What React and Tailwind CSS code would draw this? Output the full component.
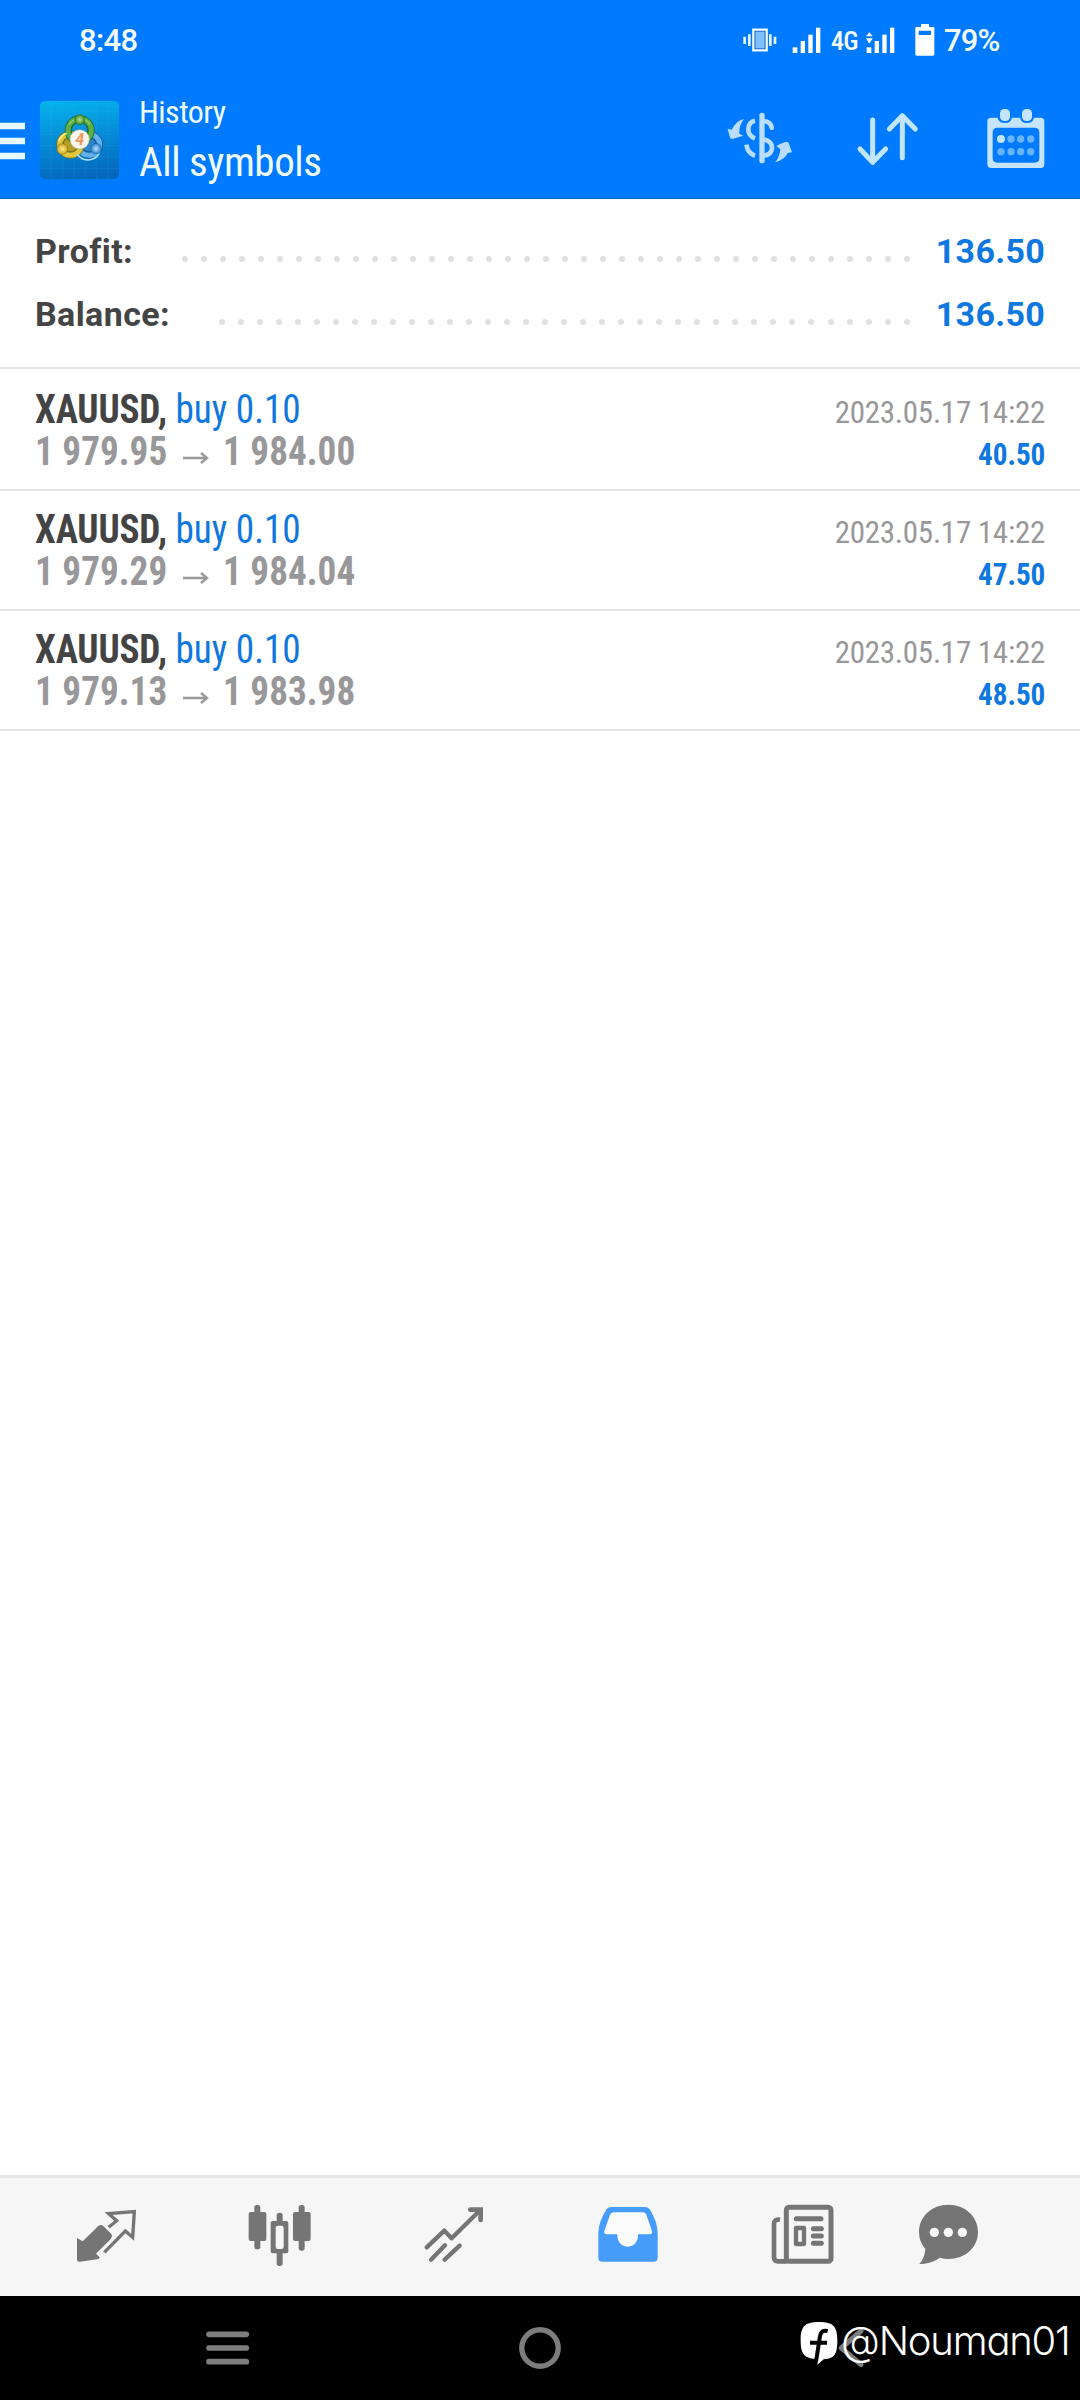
import React from 'react';

const summary = [
  { label: 'Profit:', value: '136.50', labelWidth: 'w-[147px]', dots: 39 },
  { label: 'Balance:', value: '136.50', labelWidth: 'w-[184px]', dots: 37 },
];

const deals = [
  { id: 1, symbol: 'XAUUSD', side: 'buy 0.10', open: '1 979.95', close: '1 984.00', time: '2023.05.17 14:22', profit: '40.50' },
  { id: 2, symbol: 'XAUUSD', side: 'buy 0.10', open: '1 979.29', close: '1 984.04', time: '2023.05.17 14:22', profit: '47.50' },
  { id: 3, symbol: 'XAUUSD', side: 'buy 0.10', open: '1 979.13', close: '1 983.98', time: '2023.05.17 14:22', profit: '48.50' },
];

function Signal({ data }) {
  return (
    <svg width="30" height="27" viewBox="0 0 90 81" fill="#fff">
      <rect x="2" y="61" width="14" height="17" />
      <rect x="26" y="42" width="13" height="36" />
      <rect x="49" y="23" width="13" height="55" />
      <rect x="72" y="2" width="13" height="76" />
      {data && <path d="M0 28L10 16L20 28ZM0 34H20L10 50Z" />}
    </svg>
  );
}

function StatusBar() {
  return (
    <div className="flex h-[82px] items-start text-[#f4fcff] font-medium">
      <span className="ml-[79px] mt-[21px] w-[664px] text-[31px] leading-[40px] tracking-[-0.6px]">8:48</span>
      <svg className="mt-[27px]" width="34" height="26" viewBox="130 81 102 78">
        <path d="M135 110V132M149 103V138M212 103V138M226 110V132" stroke="#e3f4ff" strokeWidth="8" />
        <rect x="161" y="89" width="40" height="62" fill="#7cc0ff" stroke="#f0faff" strokeWidth="7" />
        <rect x="166" y="94" width="30" height="52" fill="none" stroke="#2475cc" strokeWidth="3" />
      </svg>
      <div className="ml-[15px] mt-[27px]"><Signal /></div>
      <span className="ml-[9px] mt-[25px] w-[35px] text-[26px] leading-[32px] tracking-[-0.7px] font-medium font-stretch-[75%]">4G</span>
      <div className="mt-[27px]"><Signal data /></div>
      <svg className="ml-[19px] mt-[24px]" width="20" height="32" viewBox="644 72 60 96" fill="#fff">
        <path fillRule="evenodd" d="M662 72H686V81H699Q702 81 702 84V163Q702 167 698 167H649Q645 167 645 163V84Q645 81 648 81H662ZM655 92V105H692V92Z" />
      </svg>
      <span className="ml-[9px] mt-[21px] text-[31px] leading-[40px] tracking-[-0.9px]">79%</span>
    </div>
  );
}

function AppLogo() {
  return (
    <svg className="ml-[15px]" width="79" height="78" viewBox="120 303 237 234">
      <defs>
        <linearGradient id="tile" x1="0.4" y1="0" x2="0.55" y2="1">
          <stop offset="0" stopColor="#06b0ea" />
          <stop offset="0.5" stopColor="#0589d6" />
          <stop offset="1" stopColor="#0567bb" />
        </linearGradient>
        <radialGradient id="green"><stop offset="0" stopColor="#b6dc90" /><stop offset="1" stopColor="#3c8f2c" /></radialGradient>
        <radialGradient id="yellow"><stop offset="0" stopColor="#ffe98a" /><stop offset="1" stopColor="#cfa81e" /></radialGradient>
        <radialGradient id="blue"><stop offset="0" stopColor="#b8e4ff" /><stop offset="1" stopColor="#2680cc" /></radialGradient>
      </defs>
      <rect x="120" y="303" width="237" height="234" rx="15" fill="url(#tile)" />
      <path d="M153 303V537M188 303V537M222 303V537M256 303V537M290 303V537M324 303V537M120 335H357M120 369H357M120 403H357M120 437H357M120 471H357M120 505H357" stroke="#58c6f5" strokeOpacity="0.16" strokeWidth="2" />
      <g fill="none">
        <circle cx="267" cy="434" r="31" fill="#2b86c8" stroke="#145c9c" strokeWidth="22" />
        <circle cx="267" cy="434" r="32" stroke="#5fb2ea" strokeWidth="15" />
        <circle cx="211" cy="434" r="31" fill="#b79c25" stroke="#77721f" strokeWidth="22" />
        <circle cx="211" cy="434" r="32" stroke="#e2c63c" strokeWidth="15" />
        <circle cx="239" cy="391" r="34" stroke="#246c38" strokeWidth="22" />
        <circle cx="239" cy="391" r="35" stroke="#5caf47" strokeWidth="15" />
        <path d="M208 374A36 36 0 0 1 270 374" stroke="#8bcb69" strokeWidth="5" />
        <path d="M232 463A38 38 0 0 0 300 452" stroke="#a6dcff" strokeWidth="5" />
        <path d="M176 424A36 36 0 0 1 200 400" stroke="#f8ea82" strokeWidth="5" />
      </g>
      <circle cx="239" cy="359" r="15" fill="url(#green)" stroke="#2d7430" strokeWidth="2" />
      <circle cx="187" cy="447" r="16" fill="url(#yellow)" stroke="#94791a" strokeWidth="2" />
      <circle cx="288" cy="446" r="16" fill="url(#blue)" stroke="#1d66a8" strokeWidth="2" />
      <circle cx="239" cy="418" r="29" fill="#fbf6ee" stroke="#a9ba90" strokeWidth="2" />
      <text x="239" y="435" textAnchor="middle" fontSize="48" fontWeight="700" fontStyle="italic" fill="#f0955c">4</text>
    </svg>
  );
}

function Toolbar() {
  return (
    <div className="flex h-[116px] items-center">
      <svg width="25" height="66" viewBox="0 321 75 198">
        <path d="M0 378H75M0 423H75M0 468H75" stroke="#e6f9ff" strokeWidth="20" />
      </svg>
      <AppLogo />
      <div className="ml-[20px] w-[588px] whitespace-nowrap text-[#effcff] font-stretch-[75%]">
        <div className="text-[32px] leading-[44px] tracking-[-0.55px]">History</div>
        <div className="text-[41px] leading-[56px] tracking-[-0.45px]">All symbols</div>
      </div>
      <svg width="66" height="66" viewBox="81 321 198 198" fill="none" stroke="#b9deff" strokeWidth="14">
        <path d="M186 346V482" strokeLinecap="round" strokeWidth="16" />
        <path d="M165 362Q145 366 145 388Q145 408 165 415M139 434Q143 460 165 467" strokeWidth="14" />
        <path d="M190 363Q212 364 215 383M190 418Q217 424 216 445Q214 466 190 467" strokeLinecap="round" strokeWidth="14" />
        <path d="M132 357Q109 361 95 389L83 386L90 413Q95 419 104 415L130 407L118 401Q116 377 132 357ZM225 487Q238 474 241 448L229 438Q250 426 261 425Q266 426 268 434L276 457L263 459Q256 478 225 487Z" fill="#b9deff" stroke="none" />
      </svg>
      <svg className="ml-[61px]" width="66" height="66" viewBox="462 321 198 198" fill="none" stroke="#c1e5ff" strokeWidth="15" strokeLinecap="round" strokeLinejoin="round">
        <path d="M518 360V485M480 447L518 487L557 447" />
        <path d="M607 473V350M568 387L607 347L646 387" />
      </svg>
      <svg className="ml-[63px]" width="66" height="66" viewBox="849 321 198 198">
        <path fillRule="evenodd" fill="#c5e5ff" d="M874 353H893Q896 369 915 369Q933 369 936 353H960Q963 369 981 369Q999 369 1002 353H1022Q1033 353 1033 364V492Q1033 504 1022 504H874Q862 504 862 492V364Q862 353 874 353ZM892 383Q878 383 878 397V474Q878 488 892 488H1004Q1018 488 1018 474V397Q1018 383 1004 383Z" />
        <rect x="900" y="327" width="30" height="36" rx="13" fill="#c5e5ff" />
        <rect x="966" y="327" width="30" height="36" rx="13" fill="#c5e5ff" />
        <circle cx="903" cy="417" r="12" fill="#c5e5ff" />
        <g fill="#69b4ff">
          <circle cx="933" cy="417" r="11" />
          <circle cx="962" cy="417" r="11" />
          <circle cx="992" cy="417" r="11" />
          <circle cx="903" cy="455" r="11" />
          <circle cx="933" cy="455" r="11" />
          <circle cx="962" cy="455" r="11" />
          <circle cx="992" cy="455" r="11" />
        </g>
      </svg>
    </div>
  );
}

function SummaryRow({ row }) {
  return (
    <div className="flex h-[63px] items-center text-[34px] leading-[40px] whitespace-nowrap">
      <span className={`${row.labelWidth} -mt-[2px] font-bold tracking-[0.4px] text-[#444]`}>{row.label}</span>
      <div className="flex flex-1 justify-between pt-[15px]">
        {Array.from({ length: row.dots }, (_, i) => (
          <span key={i} className="size-[6px] rounded-full bg-[#e0e0e0]" />
        ))}
      </div>
      <span className="w-[135px] -mt-[2px] text-right font-bold tracking-[0.3px] text-[#0f77e0]">{row.value}</span>
    </div>
  );
}

function DealRow({ deal }) {
  return (
    <div className="flex h-[120px] justify-between border-b-2 border-[#e4e4e4] px-[35px] pt-[18px] whitespace-nowrap font-stretch-[75%]">
      <div className="text-[40px] leading-[42px]">
        <div className="origin-left scale-x-[0.93]">
          <span className="font-bold tracking-[-0.2px] text-[#444]">{deal.symbol},</span>{' '}
          <span className="text-[#0f77e0]">{deal.side}</span>
        </div>
        <div className="flex font-bold text-[#98989a]">
          <span className="w-[148px] origin-left scale-x-[0.93]">{deal.open}</span>
          <svg className="mt-[20px] mr-[14px]" width="26" height="14" viewBox="0 0 26 14" fill="none" stroke="#98989a" strokeWidth="2.4">
            <path d="M0 7H24M18 2L24 7L18 12" />
          </svg>
          <span className="origin-left scale-x-[0.93]">{deal.close}</span>
        </div>
      </div>
      <div className="pt-[3px] text-right text-[31px] leading-[42px]">
        <div className="tracking-[-0.25px] text-[#98989a]">{deal.time}</div>
        <div className="origin-right scale-x-[0.94] font-bold text-[#0f77e0]">{deal.profit}</div>
      </div>
    </div>
  );
}

function BottomNav() {
  return (
    <div className="flex h-[121px] items-center gap-[108px] border-t-3 border-[#e6e6e6] bg-[#f6f6f6] pl-[73px]">
      <svg width="66" height="66" viewBox="219 132 198 198">
        <path d="M231 234L248 244L295 198Q303 192 310 198L334 222Q339 229 333 236L288 281L299 292L296 297L240 305Q231 306 231 297Z" fill="#757575" />
        <path d="M326 202L350 182L326 161L403 155L398 232L376 213L313 277" fill="none" stroke="#757575" strokeWidth="10" />
      </svg>
      <svg width="66" height="66" viewBox="741 132 198 198" fill="#757575">
        <rect x="763" y="135" width="18" height="133" rx="8" />
        <rect x="746" y="156" width="53" height="87" rx="6" />
        <rect x="896" y="135" width="18" height="137" rx="8" />
        <rect x="879" y="156" width="53" height="87" rx="6" />
        <rect x="830" y="158" width="18" height="160" rx="8" />
        <rect x="812" y="183" width="53" height="97" rx="6" />
        <rect x="827" y="197" width="24" height="70" rx="7" fill="#f6f6f6" />
      </svg>
      <svg width="66" height="66" viewBox="183 132 198 198" fill="none" stroke="#757575" strokeWidth="13" strokeLinecap="round">
        <path d="M200 262L253 212L275 235L360 151" strokeLinejoin="round" />
        <path d="M331 149H362V180" strokeWidth="14" />
        <path d="M213 299L255 256M254 299L299 257" />
      </svg>
      <svg width="66" height="66" viewBox="705 132 198 198">
        <path d="M755 141H855Q864 141 869 148Q893 185 893 222V293Q893 305 881 305H727Q715 305 715 293V222Q715 185 740 148Q745 141 755 141Z" fill="#469cfb" />
        <path d="M762 157H849Q856 157 859 164L876 213Q878 223 868 223H834V229A31 31 0 0 1 772 229V223H741Q731 223 733 213L750 164Q753 157 762 157Z" fill="#fbfbfb" />
      </svg>
      <svg width="66" height="66" viewBox="147 132 198 198" fill="none" stroke="#757575" strokeLinecap="round">
        <rect x="199" y="142" width="134" height="162" rx="8" strokeWidth="15" />
        <path d="M180 179Q162 177 162 192V292Q162 304 174 304H200" strokeWidth="14" strokeLinecap="butt" />
        <path d="M229 176H303M280 206H304M280 228H304M280 250H304" strokeWidth="15" />
        <rect x="228" y="204" width="24" height="48" strokeWidth="13" strokeLinejoin="round" />
      </svg>
      <svg className="-ml-[27px]" width="66" height="66" viewBox="588 132 198 198">
        <path d="M685 134C736 134 774 170 774 216S736 297 685 297Q671 297 660 293Q632 312 598 312Q613 297 616 267Q597 245 597 216C597 170 635 134 685 134Z" fill="#757575" />
        <circle cx="643" cy="217" r="14" fill="#f8f8f8" />
        <circle cx="685" cy="217" r="14" fill="#f8f8f8" />
        <circle cx="727" cy="217" r="14" fill="#f8f8f8" />
      </svg>
    </div>
  );
}

function SystemBar() {
  return (
    <div className="relative flex h-[104px] items-center bg-black">
      <svg className="ml-[206px]" width="44" height="44" viewBox="618 501 132 132">
        <path d="M627 526H739M627 567H739M627 608H739" stroke="#7d7d7d" strokeWidth="17" strokeLinecap="round" />
      </svg>
      <svg className="ml-[268px]" width="44" height="44" viewBox="0 0 44 44">
        <circle cx="22" cy="22" r="18.2" fill="none" stroke="#7d7d7d" strokeWidth="5.4" />
      </svg>
      <svg className="ml-[276px]" width="28" height="44" viewBox="354 498 84 132">
        <path d="M423 513L364 564L423 614" fill="none" stroke="#7d7d7d" strokeWidth="15" strokeLinecap="round" strokeLinejoin="round" />
      </svg>
      <div className="absolute left-[800px] top-[26px] flex items-start text-white">
        <svg width="38" height="44" viewBox="240 486 114 132">
          <path d="M297 486C340 486 352 499 352 541C352 583 344 596 311 598L292 614L294 598C253 596 242 583 242 541C242 499 254 486 297 486Z" fill="#fff" />
          <path d="M323 513Q303 508 300 529L288 605M270 548H321" fill="none" stroke="#000" strokeWidth="12" />
        </svg>
        <span className="ml-[3px] -mt-[5px] whitespace-nowrap font-['Inter'] text-[40px] leading-[48px] font-light tracking-[-1.2px] [font-feature-settings:'cv11']">@Nouman01</span>
      </div>
    </div>
  );
}

export default function App() {
  return (
    <div className="flex h-[2400px] w-[1080px] flex-col overflow-hidden bg-white font-['Roboto',sans-serif]">
      <header className="border-b border-[#0a65bd] bg-[#007aff]">
        <StatusBar />
        <Toolbar />
      </header>

      <section className="h-[170px] border-b-2 border-[#e4e4e4] px-[35px] pt-[21px]">
        {summary.map(row => <SummaryRow key={row.label} row={row} />)}
      </section>

      <main className="flex-1 pt-[2px]">
        {deals.map(deal => <DealRow key={deal.id} deal={deal} />)}
      </main>

      <BottomNav />
      <SystemBar />
    </div>
  );
}
